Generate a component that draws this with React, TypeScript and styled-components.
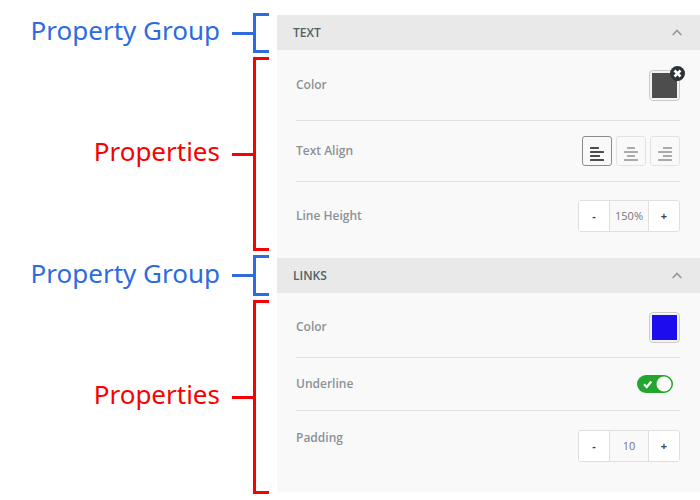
import React, { useState } from "react";
import styled, { createGlobalStyle } from "styled-components";

const GlobalStyle = createGlobalStyle`
  *, *::before, *::after { box-sizing: border-box; }
  body {
    margin: 0;
    background: #fff;
    font-family: "Open Sans", "Noto Sans", sans-serif;
    font-size: 12px;
  }
`;

const BLUE = "#2e6be0";
const RED = "#fa0000";

const Page = styled.main`
  display: flex;
  align-items: flex-start;
  gap: 8px;
`;

const Annotations = styled.aside`
  flex: none;
  width: 269px;
  padding-top: 13px;
  display: flex;
  flex-direction: column;
  gap: 4px;
`;

const Annotation = styled.div<{ $color: string; $height: number }>`
  display: flex;
  align-items: center;
  justify-content: flex-end;
  height: ${(p) => p.$height}px;
  color: ${(p) => p.$color};
`;

const AnnotationLabel = styled.span`
  margin-right: 12px;
  font-family: "Noto Sans", "Open Sans", sans-serif;
  font-size: 26px;
  line-height: 34px;
  padding-bottom: 6px;
  white-space: nowrap;
`;

const Tick = styled.span`
  width: 21px;
  height: 3px;
  background: currentColor;
`;

const Bracket = styled.span`
  width: 16px;
  height: 100%;
  border: 3px solid currentColor;
  border-right: 0;
`;

const Panel = styled.div`
  flex: 1;
  min-width: 0;
  margin-top: 15px;
  background: #f9f9f9;
`;

const GroupTitle = styled.h2`
  margin: 0;
`;

const GroupHeader = styled.button`
  display: flex;
  align-items: center;
  justify-content: space-between;
  width: 100%;
  height: 35px;
  padding: 0 18px 0 16px;
  border: 0;
  background: #e9e9e9;
  color: #526067;
  font: 600 12px/16px "Open Sans", sans-serif;
  cursor: pointer;
`;

const Rows = styled.div`
  padding: 0 20px 8px 19px;
`;

const Row = styled.div<{ $height: number; $top?: number; $align?: string }>`
  display: flex;
  align-items: ${(p) => p.$align ?? "center"};
  justify-content: space-between;
  height: ${(p) => p.$height}px;
  padding-top: ${(p) => p.$top ?? 0}px;
  color: #8b9296;
  font-weight: 600;
  line-height: 16px;

  & + & {
    border-top: 1px solid #dfe2e3;
  }
`;

const SwatchFrame = styled.div`
  position: relative;
`;

const Swatch = styled.button<{ $color: string }>`
  display: block;
  width: 31px;
  height: 31px;
  padding: 2px;
  border: 1px solid #cacaca;
  border-radius: 4px;
  background: #f3f3f3;
  cursor: pointer;

  &::before {
    content: "";
    display: block;
    height: 100%;
    background: ${(p) => p.$color};
  }
`;

const ClearButton = styled.button`
  position: absolute;
  top: -4px;
  right: -5px;
  width: 15px;
  height: 15px;
  padding: 0;
  border: 0;
  border-radius: 50%;
  background: #2c3338;
  cursor: pointer;

  svg { display: block; }
`;

const AlignGroup = styled.div`
  display: flex;
  gap: 4px;
`;

const AlignButton = styled.button<{ $active: boolean }>`
  width: 30px;
  height: 30px;
  padding: 0;
  border: 1px solid ${(p) => (p.$active ? "#8c8c8c" : "#e0e3e3")};
  border-radius: 3px;
  background: #f9f9f9;
  color: ${(p) => (p.$active ? "#4d4d4d" : "#aaa")};
  cursor: pointer;

  svg { display: block; }
`;

const StepperBox = styled.div`
  display: flex;
  width: 102px;
  height: 32px;
  border: 1px solid #dde0e0;
  border-radius: 3px;
  overflow: hidden;
`;

const StepButton = styled.button`
  width: 30px;
  padding: 0;
  border: 0;
  background: #fff;
  color: #3d4548;
  font: 700 11px/16px "Open Sans", sans-serif;
  cursor: pointer;
`;

const StepValue = styled.input`
  flex: 1;
  min-width: 0;
  padding: 0;
  border: solid #dde0e0;
  border-width: 0 1px;
  border-radius: 0;
  background: #f9f9f9;
  color: #777;
  font: 400 11px/16px "Open Sans", sans-serif;
  text-align: center;
`;

const Toggle = styled.label`
  position: relative;
  display: block;
  width: 36px;
  height: 18px;
  margin-right: 7px;
  cursor: pointer;

  svg { display: block; }
`;

const ToggleInput = styled.input`
  position: absolute;
  inset: 0;
  width: 100%;
  height: 100%;
  margin: 0;
  opacity: 0;
  cursor: pointer;
`;

type Align = "left" | "center" | "right";

const alignLines: Record<Align, [number, number, number][]> = {
  left: [[7, 10, 9], [7, 14, 14], [7, 18, 10], [7, 22, 14]],
  center: [[10, 10, 8], [7, 14, 14], [10, 18, 8], [7, 22, 14]],
  right: [[12, 10, 9], [7, 14, 14], [12, 18, 9], [7, 22, 14]],
};

function AlignIcon({ align }: { align: Align }) {
  return (
    <svg width="28" height="28" viewBox="0 0 28 28" fill="currentColor" aria-hidden="true">
      {alignLines[align].map(([x, y, w]) => (
        <rect key={y} x={x} y={y} width={w} height="2" rx="0.5" />
      ))}
    </svg>
  );
}

function Group({ title, children }: { title: string; children: React.ReactNode }) {
  const [open, setOpen] = useState(true);
  return (
    <section>
      <GroupTitle>
        <GroupHeader type="button" aria-expanded={open} onClick={() => setOpen(!open)}>
          {title}
          <svg width="10" height="7" viewBox="0 0 10 7" fill="none" stroke="#999" strokeWidth="1.8" aria-hidden="true">
            <path d={open ? "M0.7 6 5 1.5 9.3 6" : "M0.7 1 5 5.5 9.3 1"} />
          </svg>
        </GroupHeader>
      </GroupTitle>
      {open && <Rows>{children}</Rows>}
    </section>
  );
}

function Stepper({ id, initial, step, suffix = "" }: { id: string; initial: number; step: number; suffix?: string }) {
  const [value, setValue] = useState(initial);
  return (
    <StepperBox>
      <StepButton type="button" aria-label="Decrease" onClick={() => setValue(value - step)}>-</StepButton>
      <StepValue
        id={id}
        value={`${value}${suffix}`}
        onChange={(e) => setValue(parseInt(e.target.value, 10) || 0)}
      />
      <StepButton type="button" aria-label="Increase" onClick={() => setValue(value + step)}>+</StepButton>
    </StepperBox>
  );
}

const annotations = [
  { label: "Property Group", color: BLUE, height: 40 },
  { label: "Properties", color: RED, height: 194 },
  { label: "Property Group", color: BLUE, height: 41 },
  { label: "Properties", color: RED, height: 194 },
];

export default function App() {
  const [align, setAlign] = useState<Align>("left");
  const [underline, setUnderline] = useState(true);

  return (
    <>
      <GlobalStyle />
      <Page>
        <Annotations>
          {annotations.map((a, i) => (
            <Annotation key={i} $color={a.color} $height={a.height}>
              <AnnotationLabel>{a.label}</AnnotationLabel>
              <Tick />
              <Bracket />
            </Annotation>
          ))}
        </Annotations>
        <Panel>
          <Group title="TEXT">
            <Row $height={70}>
              <label htmlFor="text-color">Color</label>
              <SwatchFrame>
                <Swatch id="text-color" type="button" $color="#4d4d4d" />
                <ClearButton type="button" aria-label="Clear color">
                  <svg width="15" height="15" viewBox="0 0 15 15" stroke="#fff" strokeWidth="2.6" aria-hidden="true">
                    <path d="M4.5 4.5 10.5 10.5M10.5 4.5 4.5 10.5" />
                  </svg>
                </ClearButton>
              </SwatchFrame>
            </Row>
            <Row $height={61}>
              <span id="text-align">Text Align</span>
              <AlignGroup role="group" aria-labelledby="text-align">
                {(["left", "center", "right"] as Align[]).map((a) => (
                  <AlignButton
                    key={a}
                    type="button"
                    aria-label={a}
                    aria-pressed={a === align}
                    $active={a === align}
                    onClick={() => setAlign(a)}
                  >
                    <AlignIcon align={a} />
                  </AlignButton>
                ))}
              </AlignGroup>
            </Row>
            <Row $height={69}>
              <label htmlFor="line-height">Line Height</label>
              <Stepper id="line-height" initial={150} step={10} suffix="%" />
            </Row>
          </Group>
          <Group title="LINKS">
            <Row $height={64} $top={4}>
              <label htmlFor="link-color">Color</label>
              <Swatch id="link-color" type="button" $color="#1d0cee" />
            </Row>
            <Row $height={53}>
              <label htmlFor="underline">Underline</label>
              <Toggle>
                <ToggleInput
                  id="underline"
                  type="checkbox"
                  checked={underline}
                  onChange={(e) => setUnderline(e.target.checked)}
                />
                <svg width="36" height="18" viewBox="0 0 36 18" aria-hidden="true">
                  <rect width="36" height="18" rx="9" fill={underline ? "#22a62e" : "#aaa"} />
                  <circle cx={underline ? 27 : 9} cy="9" r="7.5" fill="#fff" />
                  {underline && <path d="M7 9.2 9.7 12 14.3 6.5" fill="none" stroke="#fff" strokeWidth="2.2" />}
                </svg>
              </Toggle>
            </Row>
            <Row $height={74} $top={19} $align="flex-start">
              <label htmlFor="padding">Padding</label>
              <Stepper id="padding" initial={10} step={1} />
            </Row>
          </Group>
        </Panel>
      </Page>
    </>
  );
}
